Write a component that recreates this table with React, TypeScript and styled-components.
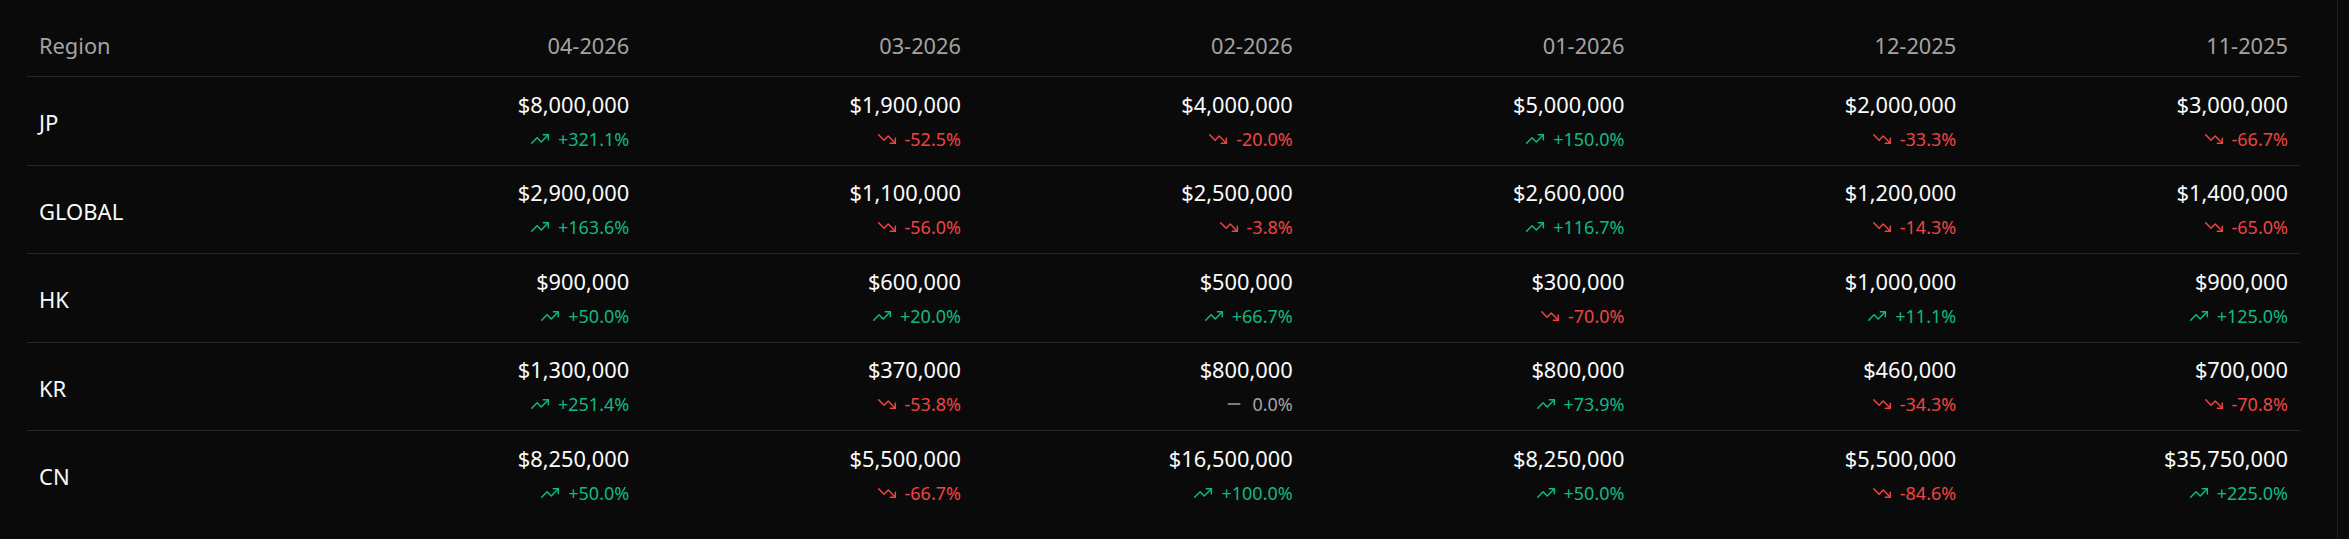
import React from "react";
import styled, { createGlobalStyle } from "styled-components";
import { TrendingUp, TrendingDown, Minus } from "lucide-react";

const GlobalStyle = createGlobalStyle`
  html, body {
    margin: 0;
    padding: 0;
    background: #0a0a0a;
  }
  body {
    font-family: "Noto Sans", "Open Sans", sans-serif;
    color: #fafafa;
  }
`;

const Page = styled.div`
  display: flex;
  min-height: 539px;
  background: #0a0a0a;
`;

const Main = styled.main`
  flex: 1;
  padding: 16px 37px 0 27px;
  min-width: 0;
`;

const Gutter = styled.aside`
  width: 11px;
  border-left: 1px solid #1f1f1f;
  background: #0b0b0b;
`;

const Table = styled.div`
  display: flex;
  flex-direction: column;
`;

const Row = styled.div<{ $header?: boolean; $last?: boolean }>`
  display: grid;
  grid-template-columns: 282.5px repeat(6, 1fr);
  align-items: center;
  height: ${(p) => (p.$header ? "60px" : "87.5px")};
  border-bottom: ${(p) => (p.$last ? "none" : "1px solid #262626")};
`;

const HeadCell = styled.div<{ $align?: "left" | "right" }>`
  padding: 0 12px;
  text-align: ${(p) => p.$align ?? "right"};
  font-size: 21.8px;
  line-height: 30px;
  font-weight: 400;
  color: #a3a3a3;
`;

const RegionCell = styled.div`
  padding: 0 12px;
  font-size: 22px;
  line-height: 30px;
  font-weight: 400;
  color: #fafafa;
  margin-top: 3px;
`;

const ValueCell = styled.div`
  padding: 0 12px;
  display: flex;
  flex-direction: column;
  align-items: flex-end;
  gap: 6px;
  margin-top: -1px;
`;

const Amount = styled.span`
  font-size: 21.8px;
  line-height: 30px;
  font-weight: 400;
  color: #fafafa;
`;

type Trend = "up" | "down" | "flat";

const Change = styled.span<{ $trend: Trend }>`
  display: inline-flex;
  align-items: center;
  gap: 8px;
  font-size: 18px;
  line-height: 24px;
  margin-top: 1px;
  color: ${(p) =>
    p.$trend === "up" ? "#10b981" : p.$trend === "down" ? "#ef4444" : "#a3a3a3"};
`;

type Cell = [string, number];

const months = ["04-2026", "03-2026", "02-2026", "01-2026", "12-2025", "11-2025"];

const rows: { region: string; cells: Cell[] }[] = [
  {
    region: "JP",
    cells: [
      ["$8,000,000", 321.1],
      ["$1,900,000", -52.5],
      ["$4,000,000", -20.0],
      ["$5,000,000", 150.0],
      ["$2,000,000", -33.3],
      ["$3,000,000", -66.7],
    ],
  },
  {
    region: "GLOBAL",
    cells: [
      ["$2,900,000", 163.6],
      ["$1,100,000", -56.0],
      ["$2,500,000", -3.8],
      ["$2,600,000", 116.7],
      ["$1,200,000", -14.3],
      ["$1,400,000", -65.0],
    ],
  },
  {
    region: "HK",
    cells: [
      ["$900,000", 50.0],
      ["$600,000", 20.0],
      ["$500,000", 66.7],
      ["$300,000", -70.0],
      ["$1,000,000", 11.1],
      ["$900,000", 125.0],
    ],
  },
  {
    region: "KR",
    cells: [
      ["$1,300,000", 251.4],
      ["$370,000", -53.8],
      ["$800,000", 0],
      ["$800,000", 73.9],
      ["$460,000", -34.3],
      ["$700,000", -70.8],
    ],
  },
  {
    region: "CN",
    cells: [
      ["$8,250,000", 50.0],
      ["$5,500,000", -66.7],
      ["$16,500,000", 100.0],
      ["$8,250,000", 50.0],
      ["$5,500,000", -84.6],
      ["$35,750,000", 225.0],
    ],
  },
];

function ChangeLabel({ pct }: { pct: number }) {
  const trend: Trend = pct > 0 ? "up" : pct < 0 ? "down" : "flat";
  const Icon = trend === "up" ? TrendingUp : trend === "down" ? TrendingDown : Minus;
  const text = `${pct > 0 ? "+" : ""}${pct.toFixed(1)}%`;
  return (
    <Change $trend={trend}>
      <Icon size={20} strokeWidth={1.8} />
      {text}
    </Change>
  );
}

export default function App() {
  return (
    <>
      <GlobalStyle />
      <Page>
        <Main>
          <Table>
            <Row $header>
              <HeadCell $align="left">Region</HeadCell>
              {months.map((m) => (
                <HeadCell key={m}>{m}</HeadCell>
              ))}
            </Row>
            {rows.map((r, i) => (
              <Row key={r.region} $last={i === rows.length - 1}>
                <RegionCell>{r.region}</RegionCell>
                {r.cells.map(([v, pct], j) => (
                  <ValueCell key={j}>
                    <Amount>{v}</Amount>
                    <ChangeLabel pct={pct} />
                  </ValueCell>
                ))}
              </Row>
            ))}
          </Table>
        </Main>
        <Gutter />
      </Page>
    </>
  );
}
